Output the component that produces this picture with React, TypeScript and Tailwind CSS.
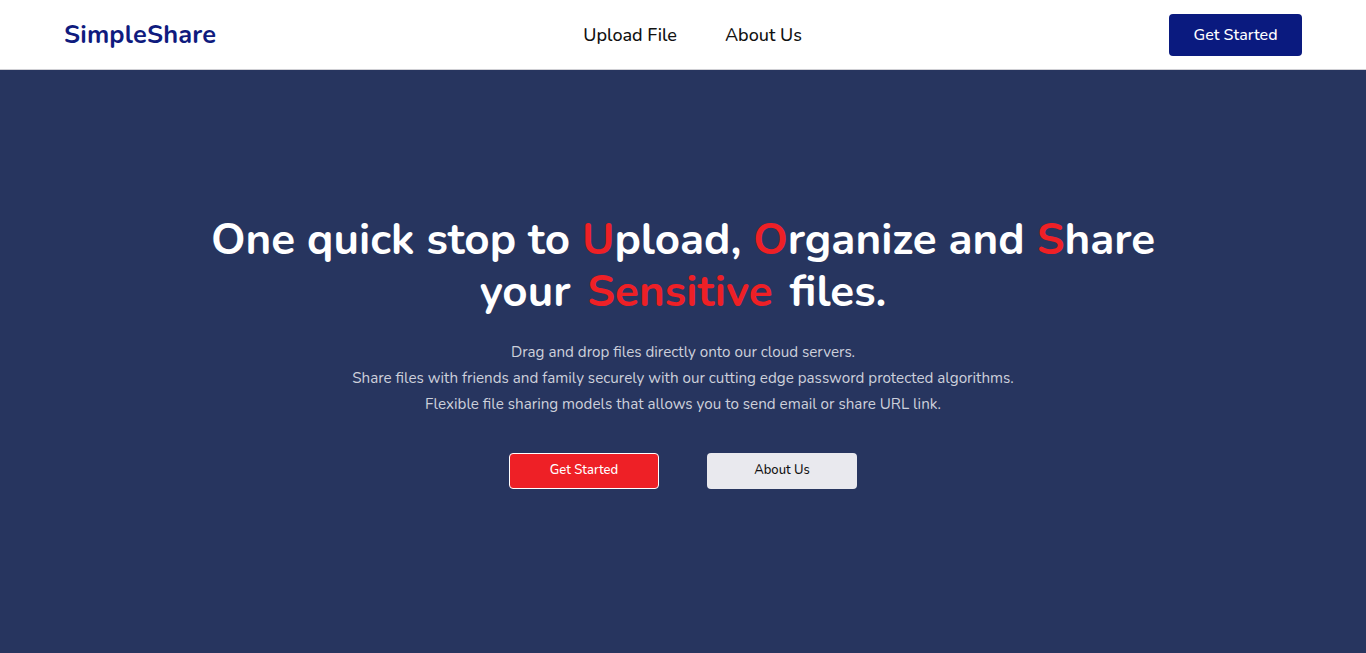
import React from "react";

export default function App() {
  const font = { fontFamily: '"Nunito", "Lato", "Noto Sans", sans-serif' };
  return (
    <div className="w-full min-h-screen flex flex-col bg-[#27355f]" style={font}>
      <header className="h-[70px] bg-white border-b border-[#cfcfd4] flex items-center justify-between px-16">
        <div className="text-[25.4px] font-bold text-[#0f1b7e] tracking-[0.2px] pt-[1px]">SimpleShare</div>
        <nav className="flex items-center gap-12 text-[18px] text-[#111111] font-medium pt-[1px]">
          <a>Upload File</a>
          <a>About Us</a>
        </nav>
        <button className="w-[133px] h-[42px] rounded-[4px] bg-[#0a1a7f] text-white text-[16px] font-medium">
          Get Started
        </button>
      </header>
      <main className="flex-1 flex flex-col items-center pt-[144px] pb-[164px]">
        <h1 className="text-center text-white font-bold text-[44px] leading-[52px]">
          One quick stop to <span className="text-[#ee2026]">U</span>pload, <span className="text-[#ee2026]">O</span>rganize and <span className="text-[#ee2026]">S</span>hare
          <br />
          your <span className="text-[#ee2026] mx-[5px]">Sensitive</span> files.
        </h1>
        <div className="mt-[21px] text-center text-[15.2px] leading-[26px] text-[#cdd0db]">
          <p>Drag and drop files directly onto our cloud servers.</p>
          <p>Share files with friends and family securely with our cutting edge password protected algorithms.</p>
          <p>Flexible file sharing models that allows you to send email or share URL link.</p>
        </div>
        <div className="mt-[36px] flex gap-12">
          <button className="w-[150px] h-[36px] rounded-[4px] bg-[#ee2026] border border-white text-white text-[13px] font-medium">
            Get Started
          </button>
          <button className="w-[150px] h-[36px] rounded-[4px] bg-[#e9e9ee] text-[#111111] text-[13px] font-medium">
            About Us
          </button>
        </div>
      </main>
    </div>
  );
}
